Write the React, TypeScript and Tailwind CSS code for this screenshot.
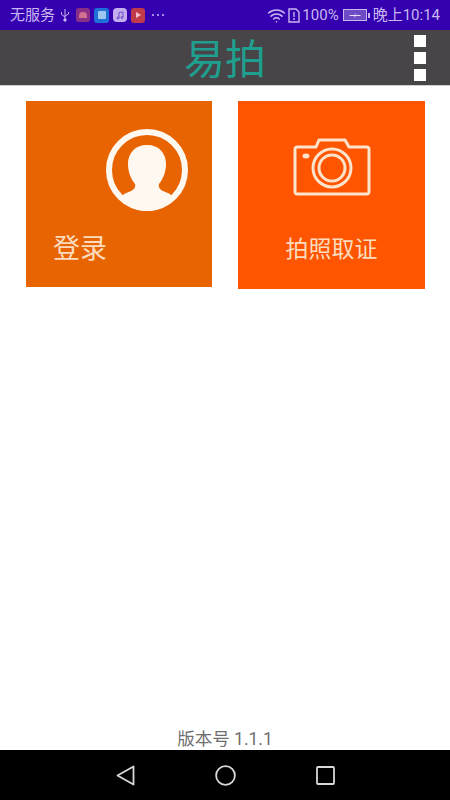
import { Wifi } from "lucide-react";

const cjk = "font-['Roboto','Noto_Sans_CJK_SC',sans-serif]";

function StatusBar() {
  return (
    <div className="flex h-[30px] items-center justify-between bg-[#3500b0] pl-[10px] pr-[10px] text-[15px] text-[#c9b8f0]">
      <div className="flex items-center">
        <span className="leading-none">无服务</span>
        <svg width="10" height="14" viewBox="0 0 10 14" className="ml-[5px]" fill="none" stroke="#c9b8f0" strokeWidth="1">
          <path d="M5 1v12M1.5 4v2.5L5 9M8.5 4v2L5 8" />
          <circle cx="5" cy="12" r="1.2" fill="#c9b8f0" />
        </svg>
        <div className="ml-[6px] flex items-center gap-[4px]">
          <div className="flex h-[14px] w-[14px] items-center justify-center rounded-[3px] bg-[#8a2f86]">
            <div className="h-[6px] w-[8px] rounded-t-full bg-[#d0718f]" />
          </div>
          <div className="flex h-[15px] w-[15px] items-center justify-center rounded-[3px] bg-[#1f6fd8]">
            <div className="h-[8px] w-[8px] rounded-[1px] bg-[#9cc7ee]" />
          </div>
          <div className="flex h-[14px] w-[14px] items-center justify-center rounded-[4px] bg-[#c3aef0]">
            <svg width="8" height="9" viewBox="0 0 8 9" fill="none" stroke="#6a4cc0" strokeWidth="1">
              <path d="M3 7V1.5L7 1v5" />
              <circle cx="2" cy="7" r="1" />
              <circle cx="6" cy="6.5" r="1" />
            </svg>
          </div>
          <div className="flex h-[15px] w-[14px] items-center justify-center rounded-[3px] bg-[#c03a4a]">
            <div className="h-0 w-0 border-y-[3px] border-l-[5px] border-y-transparent border-l-[#f3c2c8]" />
          </div>
        </div>
        <div className="ml-[7px] flex items-center gap-[3px]">
          <span className="h-[2px] w-[2px] rounded-full bg-[#c9b8f0]" />
          <span className="h-[2px] w-[2px] rounded-full bg-[#c9b8f0]" />
          <span className="h-[2px] w-[2px] rounded-full bg-[#c9b8f0]" />
        </div>
      </div>
      <div className="flex items-center">
        <Wifi size={19} strokeWidth={2} className="text-[#c9b8f0]" />
        <svg width="12" height="15" viewBox="0 0 12 15" className="ml-[2px]" fill="none" stroke="#c9b8f0" strokeWidth="1.4">
          <path d="M1 1h7l3 3v10H1z" />
          <path d="M6 4v5M6 10v2" />
        </svg>
        <span className="ml-[2px] leading-none">100%</span>
        <div className="ml-[4px] flex items-center">
          <div className="flex h-[12px] w-[24px] items-center justify-center border border-[#c9b8f0] bg-[#6d4bc4]">
            <svg width="12" height="5" viewBox="0 0 11 5" fill="#e4dcf8">
              <path d="M0 2h5l1-2v2h5v1H6L5 5V3H0z" />
            </svg>
          </div>
          <div className="ml-[1px] h-[5px] w-[2px] bg-[#c9b8f0]" />
        </div>
        <span className="ml-[3px] leading-none">晚上10:14</span>
      </div>
    </div>
  );
}

function Header() {
  return (
    <div className="relative flex h-[55px] items-center justify-center bg-[#474547] pt-[6px]">
      <span className="text-[41px] leading-none text-[#1f9f8f]">易拍</span>
      <div className="absolute right-[24px] top-[5px] flex flex-col gap-[5px]">
        <div className="h-[12px] w-[12px] bg-white" />
        <div className="h-[12px] w-[12px] bg-white" />
        <div className="h-[12px] w-[12px] bg-white" />
      </div>
    </div>
  );
}

function AvatarIcon() {
  return (
    <svg width="82" height="82" viewBox="0 0 82 82">
      <circle cx="41" cy="41" r="38" fill="none" stroke="#fff8f0" strokeWidth="6" />
      <path
        d="M41 16c-12 0-19 8-19 19 0 8 3 15 7 20 1 3-1 6-4 7l-7 3-4 5a36 36 0 0 0 54 0l-4-5-7-3c-3-1-5-4-4-7 4-5 7-12 7-20 0-11-7-19-19-19z"
        fill="#fff8f0"
      />
    </svg>
  );
}

function CameraIcon() {
  return (
    <svg width="78" height="58" viewBox="0 0 78 58" fill="none" stroke="#fbe3cc" strokeWidth="3">
      <path
        d="M4 9h19l3-7h26l4 7h18c1 0 2 1 2 2v43c0 1-1 2-2 2H4c-1 0-2-1-2-2V11c0-1 1-2 2-2z"
        strokeLinejoin="round"
      />
      <circle cx="39" cy="30" r="19" />
      <circle cx="39" cy="30" r="13" />
      <ellipse cx="13" cy="18" rx="3.5" ry="2.5" fill="#fbe3cc" stroke="none" />
    </svg>
  );
}

export default function App() {
  return (
    <div className={`flex h-[800px] w-[450px] flex-col overflow-hidden bg-white ${cjk}`}>
      <StatusBar />
      <Header />
      <div className="h-px bg-[#cfcfcf]" />

      <div className="flex flex-1 items-start pl-[26px] pt-[15px]">
        {/* login */}
        <div className="flex h-[186px] w-[186px] flex-col bg-[#e86400]">
          <div className="flex justify-end pr-[24px] pt-[28px]">
            <AvatarIcon />
          </div>
          <div className="pl-[27px] pt-[25px] text-[27px] leading-none text-[#fbdcbf]">登录</div>
        </div>
        {/* take photo */}
        <div className="ml-[26px] flex h-[188px] w-[187px] flex-col items-center bg-[#ff5500]">
          <div className="pt-[37px]">
            <CameraIcon />
          </div>
          <div className="pt-[42px] text-[23px] leading-none text-[#fbdcbf]">拍照取证</div>
        </div>
      </div>

      <div className="h-[20px] text-center text-[17.5px] leading-[19px] text-[#6f6f6f]">版本号 1.1.1</div>

      {/* nav bar */}
      <div className="flex h-[50px] items-center justify-between bg-black pl-[116px] pr-[115px]">
        <svg width="19" height="21" viewBox="0 0 19 21" fill="none" stroke="#d8d8d8" strokeWidth="1.8" strokeLinejoin="round">
          <path d="M17.5 1.5v18L1.5 10.5z" />
        </svg>
        <svg width="21" height="21" viewBox="0 0 21 21" fill="none" stroke="#d8d8d8" strokeWidth="1.8">
          <circle cx="10.5" cy="10.5" r="9.4" />
        </svg>
        <svg width="19" height="19" viewBox="0 0 19 19" fill="none" stroke="#d8d8d8" strokeWidth="1.8">
          <rect x="1" y="1" width="17" height="17" rx="1" />
        </svg>
      </div>
    </div>
  );
}
